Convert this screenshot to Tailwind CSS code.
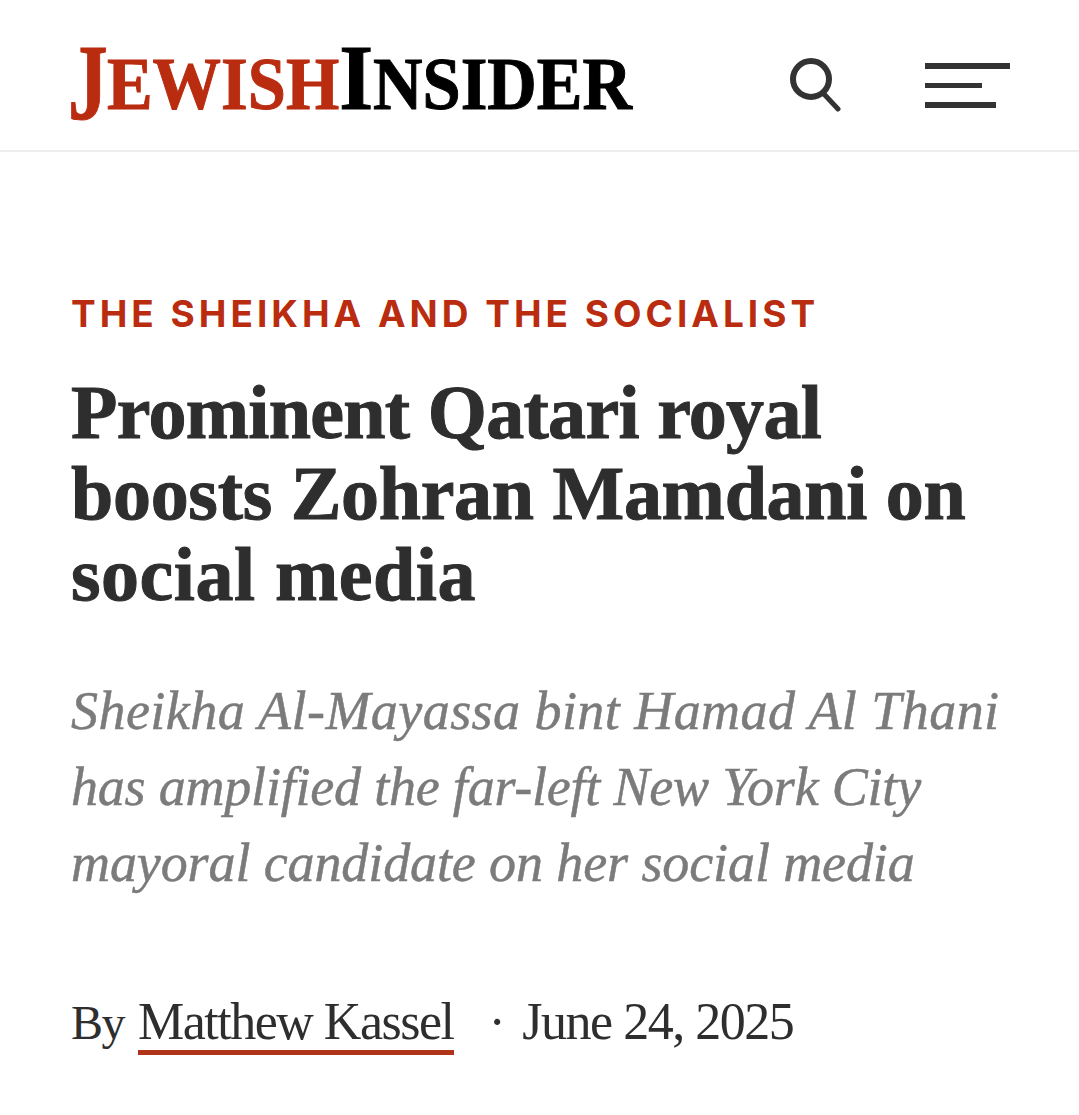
<!DOCTYPE html>
<html lang="en">
<head>
    <meta charset="UTF-8">
    <title>Jewish Insider</title>
    <script src="https://cdn.jsdelivr.net/npm/@tailwindcss/browser@4"></script>
</head>
<body class="bg-white font-['Liberation_Serif',serif] w-[1079px] h-[1115px] overflow-hidden">
    <!-- Header -->
    <header class="h-[152px] border-b-2 border-[#eeeeee] pl-[68px] pr-[69px] flex items-center justify-between">
        <div class="font-bold text-[74px] leading-none whitespace-nowrap pt-[14px] origin-left scale-x-[0.926] [-webkit-text-stroke:1px_currentColor]">
            <span class="text-[#b92c10]"><span class="inline-block w-[42px] text-[109px] leading-none align-[-10px] origin-left scale-x-[0.79]">J</span>EWISH</span><span class="text-black"><span class="text-[94px]">I</span>NSIDER</span>
        </div>
        <div class="flex items-center gap-[84px] pt-[20px]">
            <svg class="w-[52px] h-[54px]" viewBox="0 0 52 54" fill="none" stroke="#333333">
                <circle cx="22" cy="21" r="18" stroke-width="6"/>
                <path d="M34 35 L49 51" stroke-width="5" stroke-linecap="round"/>
            </svg>
            <div class="w-[85px] flex flex-col gap-[14px]">
                <div class="h-[6px] w-[85px] bg-[#333333]"></div>
                <div class="h-[5px] w-[57px] bg-[#333333]"></div>
                <div class="h-[6px] w-[71px] bg-[#333333]"></div>
            </div>
        </div>
    </header>

    <main class="pl-[71px] pr-[60px]">
        <p class="mt-[142px] font-['Inter',sans-serif] font-bold text-[37px] leading-[40px] tracking-[4px] whitespace-nowrap text-[#b92c10]">THE SHEIKHA AND THE SOCIALIST</p>
        <h1 class="mt-[38px] font-bold text-[76px] leading-[81px] whitespace-nowrap text-[#2e2e2e] [-webkit-text-stroke:1px_#2e2e2e]">
            <span class="block tracking-[-0.7px]">Prominent Qatari royal</span>
            <span class="block tracking-[-0.3px]">boosts Zohran Mamdani on</span>
            <span class="block tracking-[0.5px]">social media</span>
        </h1>
        <p class="mt-[58px] italic text-[54px] leading-[76px] whitespace-nowrap text-[#7b7b7b] [-webkit-text-stroke:0.5px_#7b7b7b]">
            <span class="block tracking-[0.45px]">Sheikha Al-Mayassa bint Hamad Al Thani</span>
            <span class="block tracking-[-0.2px]">has amplified the far-left New York City</span>
            <span class="block tracking-[-0.1px]">mayoral candidate on her social media</span>
        </p>
        <div class="mt-[93px] flex items-baseline text-[52px] leading-[56px] tracking-[-1.5px] text-[#2e2e2e]">
            <span class="text-[48px]">By</span>
            <span class="ml-[14px] border-b-[5px] border-[#b0341a]">Matthew Kassel</span>
            <span class="ml-[35px]">·</span>
            <span class="ml-[18px]">June 24, 2025</span>
        </div>
    </main>
</body>
</html>
